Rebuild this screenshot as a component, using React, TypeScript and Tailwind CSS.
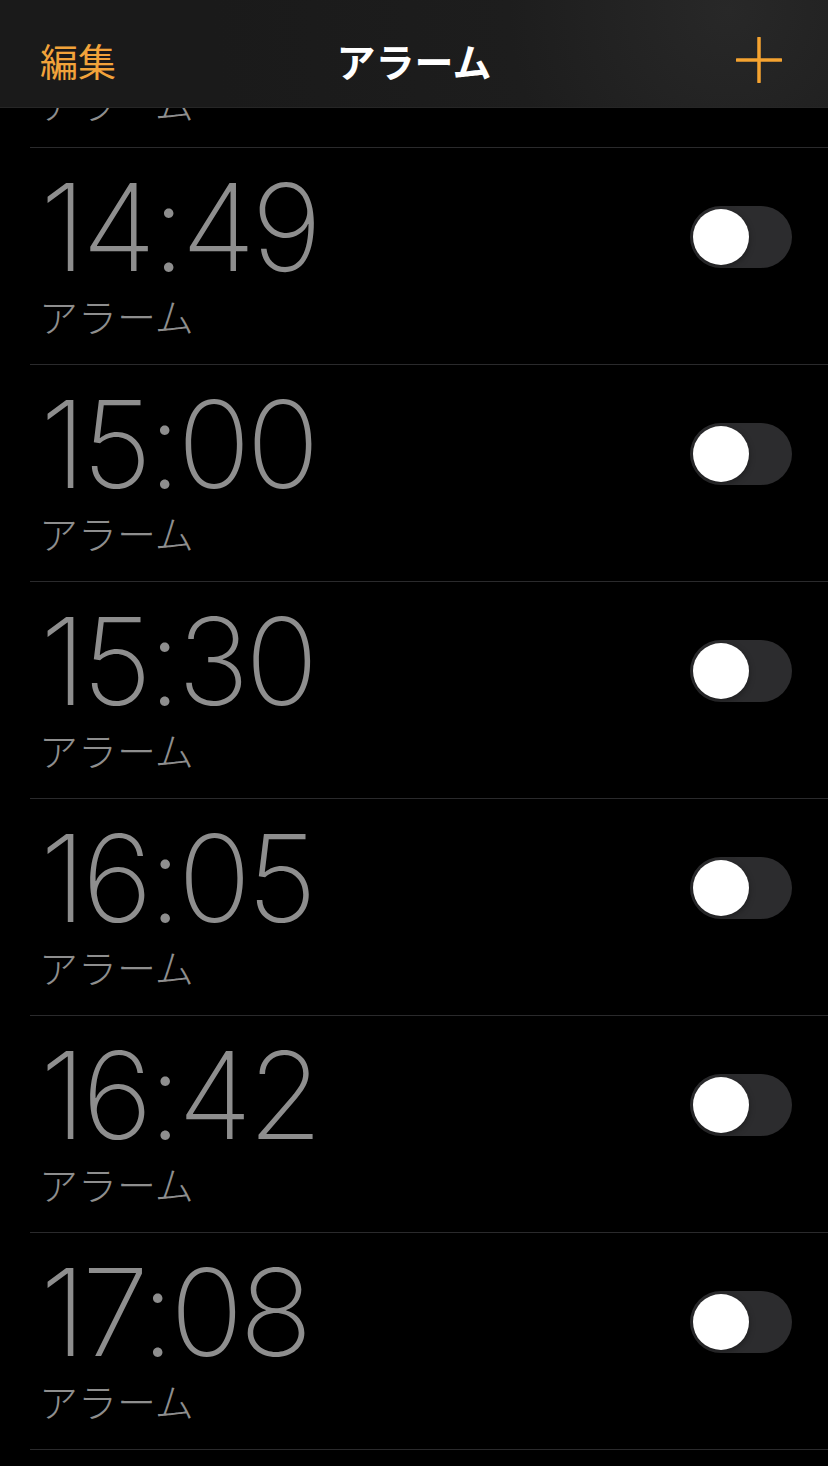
import React from "react";

const ALARMS = ["14:49", "15:00", "15:30", "16:05", "16:42", "17:08"];

const JP = { fontFamily: "'Noto Sans CJK JP', 'Noto Sans', sans-serif" };

function Toggle() {
  return (
    <div className="w-[102px] h-[62px] rounded-full bg-[#2c2c2e] p-[3px] flex items-center">
      <div className="w-[56px] h-[56px] rounded-full bg-white shadow-[0_2px_6px_rgba(0,0,0,0.35)]" />
    </div>
  );
}

function AlarmRow({ time }: { time: string }) {
  return (
    <div className="h-[217px] ml-[30px] border-t border-[#2a2a2c] flex items-start justify-between pl-[10px] pr-[36px]">
      <div className="flex flex-col">
        <div
          className="mt-[29px] text-[121px] leading-[100px] font-extralight text-[#8e8e8e] tracking-[-4px]"
          style={{ fontFamily: "Inter, Roboto, sans-serif" }}
        >
          {time}
        </div>
        <div className="mt-[14px] -ml-[1px] text-[39px] leading-[48px] font-light text-[#8e8e8e]" style={JP}>
          アラーム
        </div>
      </div>
      <div className="mt-[58px]">
        <Toggle />
      </div>
    </div>
  );
}

export default function App() {
  return (
    <div className="w-[828px] h-[1466px] bg-black overflow-hidden">
      <header className="relative h-[108px] bg-[radial-gradient(circle_at_88%_10%,#282828_0%,#1d1d1d_30%,#1a1a1a_70%)] border-b border-[#262626] flex items-center justify-between pl-[40px] pr-[46px] pt-[12px]">
        <span className="text-[38px] leading-none text-[#f2a33a]" style={JP}>
          編集
        </span>
        <span
          className="absolute left-1/2 top-[41px] -translate-x-1/2 text-[39px] leading-none font-bold text-white"
          style={JP}
        >
          アラーム
        </span>
        <svg width="46" height="46" viewBox="0 0 46 46">
          <path d="M23 1v44M1 23h44" stroke="#f5a330" strokeWidth="3.5" strokeLinecap="round" />
        </svg>
      </header>
      {/* previous row, scrolled mostly under the bar */}
      <div className="h-[39px] ml-[30px] pl-[9px] overflow-hidden">
        <div className="-mt-[30px] text-[39px] leading-[48px] font-light text-[#8e8e8e]" style={JP}>
          アラーム
        </div>
      </div>
      {ALARMS.map((t) => (
        <AlarmRow key={t} time={t} />
      ))}
      <div className="ml-[30px] border-t border-[#2a2a2c]" />
    </div>
  );
}
